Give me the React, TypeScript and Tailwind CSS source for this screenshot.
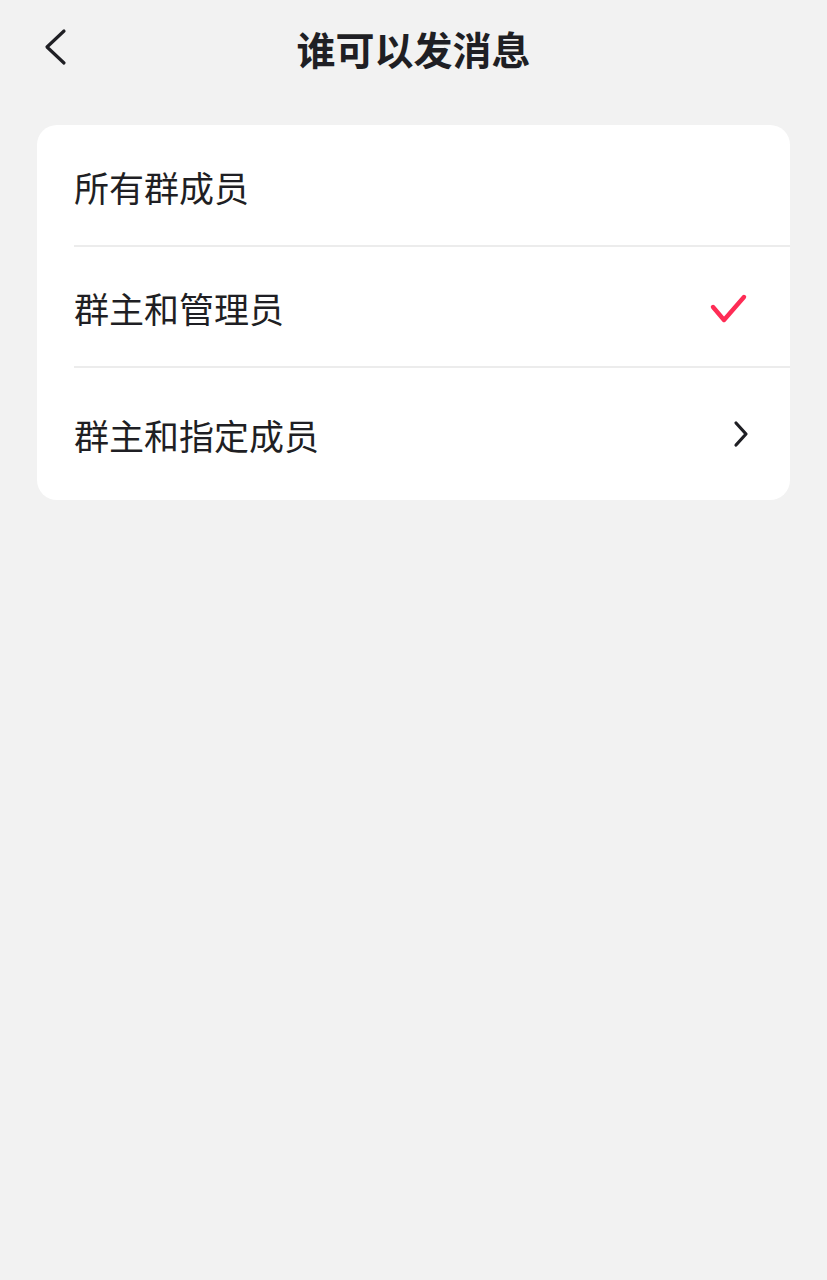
const font = { fontFamily: '"Noto Sans CJK SC", "Noto Sans", sans-serif' };

function Row({
  label,
  right,
  divider = true,
  height,
}: {
  label: string;
  right?: React.ReactNode;
  divider?: boolean;
  height: string;
}) {
  return (
    <div className={`relative flex items-center pl-[37px] pr-[41px] ${height}`}>
      <span className="flex-1 text-[35px] leading-none text-[#1f1f24]">{label}</span>
      {right}
      {divider && <div className="absolute bottom-0 left-[37px] right-0 h-[2px] bg-[#ececec]" />}
    </div>
  );
}

function Check() {
  return (
    <svg width="40" height="36" viewBox="0 0 40 36" fill="none">
      <path
        d="M4 17 L15 30 L35 7"
        stroke="#fe2c55"
        strokeWidth="4.4"
        strokeLinecap="round"
        strokeLinejoin="round"
      />
    </svg>
  );
}

function Chevron() {
  return (
    <svg width="16" height="28" viewBox="0 0 16 28" fill="none">
      <path
        d="M3 3 L13 14 L3 25"
        stroke="#1f1f24"
        strokeWidth="3.2"
        strokeLinecap="round"
        strokeLinejoin="round"
      />
    </svg>
  );
}

export default function App() {
  return (
    <div className="min-h-[1280px] w-full bg-[#f2f2f2]" style={font}>
      <header className="relative flex h-[96px] items-center justify-center">
        <button className="absolute left-[38px] top-[26px]">
          <svg width="34" height="42" viewBox="0 0 34 42" fill="none">
            <path
              d="M26 5 L9 21 L26 37"
              stroke="#1f1f24"
              strokeWidth="3.2"
              strokeLinecap="round"
              strokeLinejoin="round"
            />
          </svg>
        </button>
        <h1 className="text-[39px] font-bold leading-none text-[#1f1f24]">谁可以发消息</h1>
      </header>

      <div className="mx-[37px] mt-[29px] overflow-hidden rounded-[20px] bg-white">
        <Row label="所有群成员" height="h-[122px]" />
        <Row label="群主和管理员" height="h-[121px]" right={<Check />} />
        <Row label="群主和指定成员" height="h-[132px]" right={<Chevron />} divider={false} />
      </div>
    </div>
  );
}
